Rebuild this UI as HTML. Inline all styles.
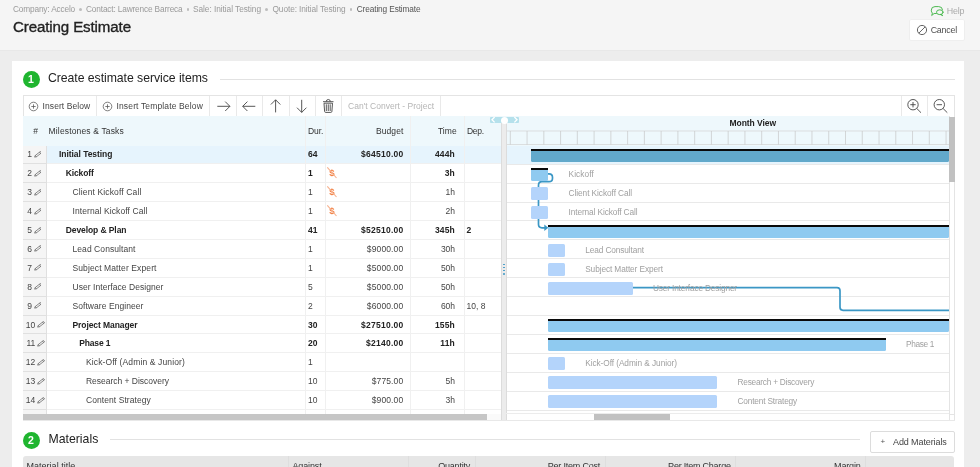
<!DOCTYPE html>
<html lang="en">
<head>
<meta charset="utf-8">
<title>Creating Estimate</title>
<style>
html,body{margin:0;padding:0;}
body{width:980px;height:467px;overflow:hidden;position:relative;background:#ededed;font-family:"Liberation Sans",sans-serif;color:#333;}
.abs{position:absolute;}
.t{position:absolute;white-space:nowrap;line-height:1;}
#hdr{left:0;top:0;width:980px;height:49.6px;background:#f5f5f5;border-bottom:0.8px solid #e8e8e8;}
.dot{position:absolute;width:2.6px;height:2.6px;border-radius:2px;background:#bdbdbd;top:8px;}
#title{-webkit-text-stroke:0.35px #222;}
#card{left:12px;top:60.5px;width:952px;height:420px;background:#fff;}
.circ{position:absolute;width:17px;height:17px;border-radius:50%;background:#1fb52f;color:#fff;font-size:10.5px;font-weight:bold;text-align:center;line-height:17px;}
.hr{position:absolute;height:1px;background:#e2e2e2;}
#tb{left:23px;top:95.3px;width:930px;height:20px;border:1px solid #e4e4e4;background:#fff;}
.vd{position:absolute;width:1px;background:#e9e9e9;top:96.3px;height:20px;}
#ghead{left:23px;top:116.3px;width:926px;height:30px;background:#eef8fc;}
.numc{position:absolute;left:23px;width:23px;background:#f5f5f5;}
.hl{position:absolute;height:1px;background:#ebebeb;}
.vl{position:absolute;width:1px;background:#f0f0f0;}
.task{position:absolute;background:#b4d4fb;border-radius:1.5px;}
.sum{position:absolute;background:#8fcaf0;border-top:2px solid #0a0a0a;border-radius:0 0 1.5px 1.5px;box-sizing:border-box;}
</style>
</head>
<body>
<div id="wrap" class="abs" style="left:0;top:0;width:980px;height:467px;will-change:transform">
<div id="hdr" class="abs"></div>

<span class="t" id="bc0" style="left:13px;top:4.97px;font-size:8.3px;color:#9a9a9a;letter-spacing:-0.17px">Company: Accelo</span>
<span class="t" id="bc1" style="left:86px;top:4.97px;font-size:8.3px;color:#9a9a9a;letter-spacing:-0.16px">Contact: Lawrence Barreca</span>
<span class="t" id="bc2" style="left:193px;top:4.97px;font-size:8.3px;color:#9a9a9a;letter-spacing:-0.05px">Sale: Initial Testing</span>
<span class="t" id="bc3" style="left:272.5px;top:4.97px;font-size:8.3px;color:#9a9a9a;letter-spacing:-0.09px">Quote: Initial Testing</span>
<span class="t" id="bc4" style="left:356.75px;top:4.97px;font-size:8.3px;color:#555;letter-spacing:-0.13px">Creating Estimate</span>
<i class="dot" style="left:79.0px"></i>
<i class="dot" style="left:186.5px"></i>
<i class="dot" style="left:265.25px"></i>
<i class="dot" style="left:349.5px"></i>
<span class="t" id="title" style="left:13px;top:19.12px;font-size:15.1px;color:#222;letter-spacing:-0.12px">Creating Estimate</span>
<svg class="abs" style="left:930px;top:5px" width="14" height="12" viewBox="0 0 14 12"><g fill="none" stroke="#43b649" stroke-width="0.95" stroke-linejoin="round" stroke-linecap="round"><path d="M6.3 8.5H4.100L1.700 10.500 2.400 8.100Q1.300 7.100 1.300 5.200 1.300 1.600 5 1.600H8.700Q12.300 1.600 12.500 4.700"/><ellipse cx="9.8" cy="7.2" rx="3.3" ry="2.4"/><path d="M11.500 9.300 12.700 10.700 10.500 9.600"/></g></svg>
<span class="t" id="help" style="left:946.8px;top:6.57px;font-size:8.9px;color:#aaa;letter-spacing:-0.17px">Help</span>
<div class="abs" id="cancel" style="left:909.8px;top:19.8px;width:54.2px;height:20.2px;background:#fff;box-shadow:0 0 0 0.6px #e9e9e9;border-radius:1px"></div>
<svg class="abs" style="left:916px;top:24px" width="12" height="12" viewBox="0 0 12 12"><circle cx="6" cy="6" r="4.6" fill="none" stroke="#555" stroke-width="0.9"/><path d="M2.8 9.2 9.2 2.8" stroke="#555" stroke-width="0.9"/></svg>
<span class="t" id="canceltxt" style="left:930.7px;top:25.77px;font-size:8.9px;color:#505050;letter-spacing:-0.24px">Cancel</span>
<div id="card" class="abs"></div>
<div class="circ" style="left:22.5px;top:70.5px">1</div>
<span class="t" id="sec1" style="left:48px;top:71.62px;font-size:12.26px;color:#222;letter-spacing:-0.05px">Create estimate service items</span>
<div class="hr" style="left:220px;top:79px;width:735px"></div>
<div id="tb" class="abs"></div>
<i class="vd" style="left:96px"></i>
<i class="vd" style="left:209px"></i>
<i class="vd" style="left:236px"></i>
<i class="vd" style="left:262px"></i>
<i class="vd" style="left:289px"></i>
<i class="vd" style="left:314.5px"></i>
<i class="vd" style="left:341px"></i>
<i class="vd" style="left:440px"></i>
<i class="vd" style="left:900.8px"></i>
<i class="vd" style="left:927px"></i>
<svg class="abs" style="left:27.9px;top:101px" width="11" height="11" viewBox="0 0 11 11"><circle cx="5.5" cy="5.5" r="4.3" fill="none" stroke="#555" stroke-width="0.75"/><path d="M5.5 3.3v4.400M3.3 5.5h4.400" stroke="#555" stroke-width="0.75"/></svg>
<span class="t" id="ib" style="left:42.6px;top:101.9px;font-size:8.5px;color:#444;letter-spacing:0.07px">Insert Below</span>
<svg class="abs" style="left:101.9px;top:101px" width="11" height="11" viewBox="0 0 11 11"><circle cx="5.5" cy="5.5" r="4.3" fill="none" stroke="#555" stroke-width="0.75"/><path d="M5.5 3.3v4.400M3.3 5.5h4.400" stroke="#555" stroke-width="0.75"/></svg>
<span class="t" id="itb" style="left:116.5px;top:101.9px;font-size:8.5px;color:#444;letter-spacing:0.14px">Insert Template Below</span>
<svg class="abs" style="left:0;top:0" width="980" height="467" viewBox="0 0 980 467">
<path d="M217.29999999999998 106.3H229.9M225.20000000000002 101.6L229.9 106.3L225.20000000000002 111.0" fill="none" stroke="#444" stroke-width="0.9"/>
<path d="M255.3 106.3H242.7M247.39999999999998 101.6L242.7 106.3L247.39999999999998 111.0" fill="none" stroke="#444" stroke-width="0.9"/>
<path d="M275.6 112.39999999999999V99.8M270.90000000000003 104.5L275.6 99.8L280.3 104.5" fill="none" stroke="#444" stroke-width="0.9"/>
<path d="M301.7 99.8V112.39999999999999M297.0 107.69999999999999L301.7 112.39999999999999L306.4 107.69999999999999" fill="none" stroke="#444" stroke-width="0.9"/>
<g fill="none" stroke="#444" stroke-width="0.9" stroke-linejoin="round"><path d="M323 101.7h10.500M326.3 101.5q0-2 2-2q2 0 2 2"/><path d="M324 103.2l.6 8.200q.1 1 1.100 1h5.100q1 0 1.100-1l.6-8.200z"/><path d="M326.3 104.3v6.700M328.250 104.3v6.700M330.2 104.3v6.700"/></g>
<g fill="none" stroke="#444" stroke-width="0.9"><circle cx="913" cy="104.7" r="5.2"/><path d="M916.8 108.5 921 112.7M913 102v5.400M910.3 104.7h5.400"/><circle cx="939.3" cy="104.7" r="5.2"/><path d="M943.1 108.5 947.3 112.7M936.600 104.7h5.400"/></g>
</svg>
<span class="t" id="cc" style="left:348.1px;top:101.9px;font-size:8.5px;color:#b5b5b5;letter-spacing:0.01px">Can't Convert - Project</span>
<div id="ghead" class="abs"></div>
<span class="t" id="gh0" style="left:33.2px;top:126.9px;font-size:8.5px;color:#333">#</span>
<span class="t" id="gh1" style="left:48.6px;top:126.9px;font-size:8.5px;color:#333;letter-spacing:0.15px">Milestones &amp; Tasks</span>
<span class="t" id="gh2" style="left:308px;top:126.9px;font-size:8.5px;color:#333;letter-spacing:-0.07px">Dur.</span>
<span class="t" id="gh3" style="right:576.7px;top:126.9px;font-size:8.5px;color:#333;letter-spacing:0.06px;margin-right:-0.06px">Budget</span>
<span class="t" id="gh4" style="right:523.3px;top:126.9px;font-size:8.5px;color:#333;letter-spacing:0.06px;margin-right:-0.06px">Time</span>
<span class="t" id="gh5" style="left:467px;top:126.9px;font-size:8.5px;color:#333;letter-spacing:-0.32px">Dep.</span>
<span class="t" id="mv" style="left:729.5px;top:119.3px;font-size:8.5px;color:#222;font-weight:bold;letter-spacing:-0.06px">Month View</span>
<div class="abs" style="left:23px;top:145.5px;width:478px;height:18.08px;background:#e6f4fd"></div>
<div class="abs" style="left:506.4px;top:145.5px;width:442.6px;height:18.68px;background:#e6f4fd"></div>
<div class="numc" style="top:145.5px;height:268.3px"></div>
<i class="hl" style="left:46px;top:163.08px;width:455px;background:#f0f0f0"></i>
<i class="hl" style="left:506.4px;top:163.68px;width:442.6px;background:#e9e9e9"></i>
<i class="hl" style="left:23px;top:163.08px;width:23px;background:#e0e0e0"></i>
<i class="hl" style="left:46px;top:182.01px;width:455px;background:#f0f0f0"></i>
<i class="hl" style="left:506.4px;top:182.6px;width:442.6px;background:#e9e9e9"></i>
<i class="hl" style="left:23px;top:182.01px;width:23px;background:#e0e0e0"></i>
<i class="hl" style="left:46px;top:200.94px;width:455px;background:#f0f0f0"></i>
<i class="hl" style="left:506.4px;top:201.53px;width:442.6px;background:#e9e9e9"></i>
<i class="hl" style="left:23px;top:200.94px;width:23px;background:#e0e0e0"></i>
<i class="hl" style="left:46px;top:219.87px;width:455px;background:#f0f0f0"></i>
<i class="hl" style="left:506.4px;top:220.45px;width:442.6px;background:#e9e9e9"></i>
<i class="hl" style="left:23px;top:219.87px;width:23px;background:#e0e0e0"></i>
<i class="hl" style="left:46px;top:238.8px;width:455px;background:#f0f0f0"></i>
<i class="hl" style="left:506.4px;top:239.38px;width:442.6px;background:#e9e9e9"></i>
<i class="hl" style="left:23px;top:238.8px;width:23px;background:#e0e0e0"></i>
<i class="hl" style="left:46px;top:257.73px;width:455px;background:#f0f0f0"></i>
<i class="hl" style="left:506.4px;top:258.3px;width:442.6px;background:#e9e9e9"></i>
<i class="hl" style="left:23px;top:257.73px;width:23px;background:#e0e0e0"></i>
<i class="hl" style="left:46px;top:276.66px;width:455px;background:#f0f0f0"></i>
<i class="hl" style="left:506.4px;top:277.23px;width:442.6px;background:#e9e9e9"></i>
<i class="hl" style="left:23px;top:276.66px;width:23px;background:#e0e0e0"></i>
<i class="hl" style="left:46px;top:295.59px;width:455px;background:#f0f0f0"></i>
<i class="hl" style="left:506.4px;top:296.15px;width:442.6px;background:#e9e9e9"></i>
<i class="hl" style="left:23px;top:295.59px;width:23px;background:#e0e0e0"></i>
<i class="hl" style="left:46px;top:314.52px;width:455px;background:#f0f0f0"></i>
<i class="hl" style="left:506.4px;top:315.08px;width:442.6px;background:#e9e9e9"></i>
<i class="hl" style="left:23px;top:314.52px;width:23px;background:#e0e0e0"></i>
<i class="hl" style="left:46px;top:333.45px;width:455px;background:#f0f0f0"></i>
<i class="hl" style="left:506.4px;top:334px;width:442.6px;background:#e9e9e9"></i>
<i class="hl" style="left:23px;top:333.45px;width:23px;background:#e0e0e0"></i>
<i class="hl" style="left:46px;top:352.38px;width:455px;background:#f0f0f0"></i>
<i class="hl" style="left:506.4px;top:352.93px;width:442.6px;background:#e9e9e9"></i>
<i class="hl" style="left:23px;top:352.38px;width:23px;background:#e0e0e0"></i>
<i class="hl" style="left:46px;top:371.31px;width:455px;background:#f0f0f0"></i>
<i class="hl" style="left:506.4px;top:371.85px;width:442.6px;background:#e9e9e9"></i>
<i class="hl" style="left:23px;top:371.31px;width:23px;background:#e0e0e0"></i>
<i class="hl" style="left:46px;top:390.24px;width:455px;background:#f0f0f0"></i>
<i class="hl" style="left:506.4px;top:390.77px;width:442.6px;background:#e9e9e9"></i>
<i class="hl" style="left:23px;top:390.24px;width:23px;background:#e0e0e0"></i>
<i class="hl" style="left:46px;top:409.17px;width:455px;background:#f0f0f0"></i>
<i class="hl" style="left:506.4px;top:409.7px;width:442.6px;background:#e9e9e9"></i>
<i class="hl" style="left:23px;top:409.17px;width:23px;background:#e0e0e0"></i>
<i class="vl" style="left:45.6px;top:145.5px;height:269.3px;background:#e0e0e0"></i>
<i class="vl" style="left:304.8px;top:116px;height:298.5px"></i>
<i class="vl" style="left:324.7px;top:116px;height:298.5px"></i>
<i class="vl" style="left:409.5px;top:116px;height:298.5px"></i>
<i class="vl" style="left:463.5px;top:116px;height:298.5px"></i>
<span class="t" id="r1" style="right:948.1px;top:150.36px;font-size:8.5px;color:#444">1</span>
<svg class="abs" style="left:33.5px;top:150.86px" width="7.9" height="7" viewBox="0 0 9 8"><g transform="rotate(-38 4.5 4)" fill="none" stroke="#555" stroke-width="0.7" stroke-linejoin="round"><path d="M-.4 4 1.500 3v2zM1.5 3h7.400v2h-7.400M7.600 3v2"/></g></svg>
<span class="t" id="n1" style="left:59px;top:150.36px;font-size:8.5px;color:#222;font-weight:bold;letter-spacing:-0.05px">Initial Testing</span>
<span class="t" id="d1" style="left:308px;top:150.36px;font-size:8.5px;color:#222;font-weight:bold;letter-spacing:0.1px">64</span>
<span class="t" id="b1" style="right:576.8px;top:150.36px;font-size:8.5px;color:#222;font-weight:bold;letter-spacing:0.25px;margin-right:-0.25px">$64510.00</span>
<span class="t" id="t1" style="right:525.2px;top:150.36px;font-size:8.5px;color:#222;font-weight:bold;letter-spacing:0.16px;margin-right:-0.16px">444h</span>
<span class="t" id="r2" style="right:948.1px;top:169.27px;font-size:8.5px;color:#444">2</span>
<svg class="abs" style="left:33.5px;top:169.77px" width="7.9" height="7" viewBox="0 0 9 8"><g transform="rotate(-38 4.5 4)" fill="none" stroke="#555" stroke-width="0.7" stroke-linejoin="round"><path d="M-.4 4 1.500 3v2zM1.5 3h7.400v2h-7.400M7.600 3v2"/></g></svg>
<span class="t" id="n2" style="left:65.75px;top:169.27px;font-size:8.5px;color:#222;font-weight:bold;letter-spacing:-0.12px">Kickoff</span>
<span class="t" id="d2" style="left:308px;top:169.27px;font-size:8.5px;color:#222;font-weight:bold;letter-spacing:0.1px">1</span>
<span class="t" id="t2" style="right:525.2px;top:169.27px;font-size:8.5px;color:#222;font-weight:bold;letter-spacing:0.15px;margin-right:-0.15px">3h</span>
<svg class="abs" style="left:326.1px;top:166.27px" width="12" height="13" viewBox="0 0 12 13"><text x="6" y="9.8" text-anchor="middle" font-family="Liberation Sans, sans-serif" font-weight="bold" font-size="9.6" fill="#f27d3f">$</text><path d="M1.3 1.3 10.5 12" stroke="#f6b08c" stroke-width="1.1" fill="none"/></svg>
<span class="t" id="r3" style="right:948.1px;top:188.18px;font-size:8.5px;color:#444">3</span>
<svg class="abs" style="left:33.5px;top:188.68px" width="7.9" height="7" viewBox="0 0 9 8"><g transform="rotate(-38 4.5 4)" fill="none" stroke="#555" stroke-width="0.7" stroke-linejoin="round"><path d="M-.4 4 1.500 3v2zM1.5 3h7.400v2h-7.400M7.600 3v2"/></g></svg>
<span class="t" id="n3" style="left:72.5px;top:188.18px;font-size:8.5px;color:#444;letter-spacing:0.13px">Client Kickoff Call</span>
<span class="t" id="d3" style="left:308px;top:188.18px;font-size:8.5px;color:#444">1</span>
<span class="t" id="t3" style="right:525px;top:188.18px;font-size:8.5px;color:#444;letter-spacing:-0.03px;margin-right:0.03px">1h</span>
<svg class="abs" style="left:326.1px;top:185.18px" width="12" height="13" viewBox="0 0 12 13"><text x="6" y="9.8" text-anchor="middle" font-family="Liberation Sans, sans-serif" font-weight="bold" font-size="9.6" fill="#f27d3f">$</text><path d="M1.3 1.3 10.5 12" stroke="#f6b08c" stroke-width="1.1" fill="none"/></svg>
<span class="t" id="r4" style="right:948.1px;top:207.09px;font-size:8.5px;color:#444">4</span>
<svg class="abs" style="left:33.5px;top:207.59px" width="7.9" height="7" viewBox="0 0 9 8"><g transform="rotate(-38 4.5 4)" fill="none" stroke="#555" stroke-width="0.7" stroke-linejoin="round"><path d="M-.4 4 1.500 3v2zM1.5 3h7.400v2h-7.400M7.600 3v2"/></g></svg>
<span class="t" id="n4" style="left:72.5px;top:207.09px;font-size:8.5px;color:#444;letter-spacing:0.09px">Internal Kickoff Call</span>
<span class="t" id="d4" style="left:308px;top:207.09px;font-size:8.5px;color:#444">1</span>
<span class="t" id="t4" style="right:525px;top:207.09px;font-size:8.5px;color:#444;letter-spacing:-0.03px;margin-right:0.03px">2h</span>
<svg class="abs" style="left:326.1px;top:204.09px" width="12" height="13" viewBox="0 0 12 13"><text x="6" y="9.8" text-anchor="middle" font-family="Liberation Sans, sans-serif" font-weight="bold" font-size="9.6" fill="#f27d3f">$</text><path d="M1.3 1.3 10.5 12" stroke="#f6b08c" stroke-width="1.1" fill="none"/></svg>
<span class="t" id="r5" style="right:948.1px;top:226px;font-size:8.5px;color:#444">5</span>
<svg class="abs" style="left:33.5px;top:226.5px" width="7.9" height="7" viewBox="0 0 9 8"><g transform="rotate(-38 4.5 4)" fill="none" stroke="#555" stroke-width="0.7" stroke-linejoin="round"><path d="M-.4 4 1.500 3v2zM1.5 3h7.400v2h-7.400M7.600 3v2"/></g></svg>
<span class="t" id="n5" style="left:65.75px;top:226px;font-size:8.5px;color:#222;font-weight:bold;letter-spacing:-0.09px">Develop &amp; Plan</span>
<span class="t" id="d5" style="left:308px;top:226px;font-size:8.5px;color:#222;font-weight:bold;letter-spacing:0.1px">41</span>
<span class="t" id="b5" style="right:576.8px;top:226px;font-size:8.5px;color:#222;font-weight:bold;letter-spacing:0.24px;margin-right:-0.24px">$52510.00</span>
<span class="t" id="t5" style="right:525.2px;top:226px;font-size:8.5px;color:#222;font-weight:bold;letter-spacing:0.15px;margin-right:-0.15px">345h</span>
<span class="t" id="p5" style="left:466.5px;top:226px;font-size:8.5px;color:#222;font-weight:bold">2</span>
<span class="t" id="r6" style="right:948.1px;top:244.91px;font-size:8.5px;color:#444">6</span>
<svg class="abs" style="left:33.5px;top:245.4px" width="7.9" height="7" viewBox="0 0 9 8"><g transform="rotate(-38 4.5 4)" fill="none" stroke="#555" stroke-width="0.7" stroke-linejoin="round"><path d="M-.4 4 1.500 3v2zM1.5 3h7.400v2h-7.400M7.600 3v2"/></g></svg>
<span class="t" id="n6" style="left:72.5px;top:244.91px;font-size:8.5px;color:#444;letter-spacing:0.07px">Lead Consultant</span>
<span class="t" id="d6" style="left:308px;top:244.91px;font-size:8.5px;color:#444">1</span>
<span class="t" id="b6" style="right:576.8px;top:244.91px;font-size:8.5px;color:#444;letter-spacing:0.13px;margin-right:-0.13px">$9000.00</span>
<span class="t" id="t6" style="right:525px;top:244.91px;font-size:8.5px;color:#444;letter-spacing:-0.06px;margin-right:0.06px">30h</span>
<span class="t" id="r7" style="right:948.1px;top:263.82px;font-size:8.5px;color:#444">7</span>
<svg class="abs" style="left:33.5px;top:264.31px" width="7.9" height="7" viewBox="0 0 9 8"><g transform="rotate(-38 4.5 4)" fill="none" stroke="#555" stroke-width="0.7" stroke-linejoin="round"><path d="M-.4 4 1.500 3v2zM1.5 3h7.400v2h-7.400M7.600 3v2"/></g></svg>
<span class="t" id="n7" style="left:72.5px;top:263.82px;font-size:8.5px;color:#444;letter-spacing:0.11px">Subject Matter Expert</span>
<span class="t" id="d7" style="left:308px;top:263.82px;font-size:8.5px;color:#444">1</span>
<span class="t" id="b7" style="right:576.8px;top:263.82px;font-size:8.5px;color:#444;letter-spacing:0.13px;margin-right:-0.13px">$5000.00</span>
<span class="t" id="t7" style="right:525px;top:263.82px;font-size:8.5px;color:#444;letter-spacing:-0.03px;margin-right:0.03px">50h</span>
<span class="t" id="r8" style="right:948.1px;top:282.73px;font-size:8.5px;color:#444">8</span>
<svg class="abs" style="left:33.5px;top:283.22px" width="7.9" height="7" viewBox="0 0 9 8"><g transform="rotate(-38 4.5 4)" fill="none" stroke="#555" stroke-width="0.7" stroke-linejoin="round"><path d="M-.4 4 1.500 3v2zM1.5 3h7.400v2h-7.400M7.600 3v2"/></g></svg>
<span class="t" id="n8" style="left:72.5px;top:282.73px;font-size:8.5px;color:#444;letter-spacing:0.05px">User Interface Designer</span>
<span class="t" id="d8" style="left:308px;top:282.73px;font-size:8.5px;color:#444">5</span>
<span class="t" id="b8" style="right:576.8px;top:282.73px;font-size:8.5px;color:#444;letter-spacing:0.13px;margin-right:-0.13px">$5000.00</span>
<span class="t" id="t8" style="right:525px;top:282.73px;font-size:8.5px;color:#444;letter-spacing:-0.03px;margin-right:0.03px">50h</span>
<span class="t" id="r9" style="right:948.1px;top:301.64px;font-size:8.5px;color:#444">9</span>
<svg class="abs" style="left:33.5px;top:302.13px" width="7.9" height="7" viewBox="0 0 9 8"><g transform="rotate(-38 4.5 4)" fill="none" stroke="#555" stroke-width="0.7" stroke-linejoin="round"><path d="M-.4 4 1.500 3v2zM1.5 3h7.400v2h-7.400M7.600 3v2"/></g></svg>
<span class="t" id="n9" style="left:72.5px;top:301.64px;font-size:8.5px;color:#444;letter-spacing:0.06px">Software Engineer</span>
<span class="t" id="d9" style="left:308px;top:301.64px;font-size:8.5px;color:#444">2</span>
<span class="t" id="b9" style="right:576.8px;top:301.64px;font-size:8.5px;color:#444;letter-spacing:0.13px;margin-right:-0.13px">$6000.00</span>
<span class="t" id="t9" style="right:525px;top:301.64px;font-size:8.5px;color:#444;letter-spacing:-0.03px;margin-right:0.03px">60h</span>
<span class="t" id="p9" style="left:466.5px;top:301.64px;font-size:8.5px;color:#444">10, 8</span>
<span class="t" id="r10" style="right:944.8px;top:320.54px;font-size:8.5px;color:#444">10</span>
<svg class="abs" style="left:36.8px;top:321.04px" width="7.9" height="7" viewBox="0 0 9 8"><g transform="rotate(-38 4.5 4)" fill="none" stroke="#555" stroke-width="0.7" stroke-linejoin="round"><path d="M-.4 4 1.500 3v2zM1.5 3h7.400v2h-7.400M7.600 3v2"/></g></svg>
<span class="t" id="n10" style="left:72.5px;top:320.54px;font-size:8.5px;color:#222;font-weight:bold;letter-spacing:-0.08px">Project Manager</span>
<span class="t" id="d10" style="left:308px;top:320.54px;font-size:8.5px;color:#222;font-weight:bold;letter-spacing:0.1px">30</span>
<span class="t" id="b10" style="right:576.8px;top:320.54px;font-size:8.5px;color:#222;font-weight:bold;letter-spacing:0.24px;margin-right:-0.24px">$27510.00</span>
<span class="t" id="t10" style="right:525.2px;top:320.54px;font-size:8.5px;color:#222;font-weight:bold;letter-spacing:0.15px;margin-right:-0.15px">155h</span>
<span class="t" id="r11" style="right:944.8px;top:339.45px;font-size:8.5px;color:#444">11</span>
<svg class="abs" style="left:36.8px;top:339.95px" width="7.9" height="7" viewBox="0 0 9 8"><g transform="rotate(-38 4.5 4)" fill="none" stroke="#555" stroke-width="0.7" stroke-linejoin="round"><path d="M-.4 4 1.500 3v2zM1.5 3h7.400v2h-7.400M7.600 3v2"/></g></svg>
<span class="t" id="n11" style="left:79.25px;top:339.45px;font-size:8.5px;color:#222;font-weight:bold;letter-spacing:-0.16px">Phase 1</span>
<span class="t" id="d11" style="left:308px;top:339.45px;font-size:8.5px;color:#222;font-weight:bold;letter-spacing:0.1px">20</span>
<span class="t" id="b11" style="right:576.8px;top:339.45px;font-size:8.5px;color:#222;font-weight:bold;letter-spacing:0.24px;margin-right:-0.24px">$2140.00</span>
<span class="t" id="t11" style="right:525.2px;top:339.45px;font-size:8.5px;color:#222;font-weight:bold;letter-spacing:0.15px;margin-right:-0.15px">11h</span>
<span class="t" id="r12" style="right:944.8px;top:358.36px;font-size:8.5px;color:#444">12</span>
<svg class="abs" style="left:36.8px;top:358.86px" width="7.9" height="7" viewBox="0 0 9 8"><g transform="rotate(-38 4.5 4)" fill="none" stroke="#555" stroke-width="0.7" stroke-linejoin="round"><path d="M-.4 4 1.500 3v2zM1.5 3h7.400v2h-7.400M7.600 3v2"/></g></svg>
<span class="t" id="n12" style="left:86px;top:358.36px;font-size:8.5px;color:#444;letter-spacing:0.13px">Kick-Off (Admin &amp; Junior)</span>
<span class="t" id="d12" style="left:308px;top:358.36px;font-size:8.5px;color:#444">1</span>
<span class="t" id="r13" style="right:944.8px;top:377.27px;font-size:8.5px;color:#444">13</span>
<svg class="abs" style="left:36.8px;top:377.77px" width="7.9" height="7" viewBox="0 0 9 8"><g transform="rotate(-38 4.5 4)" fill="none" stroke="#555" stroke-width="0.7" stroke-linejoin="round"><path d="M-.4 4 1.500 3v2zM1.5 3h7.400v2h-7.400M7.600 3v2"/></g></svg>
<span class="t" id="n13" style="left:86px;top:377.27px;font-size:8.5px;color:#444;letter-spacing:-0.02px">Research + Discovery</span>
<span class="t" id="d13" style="left:308px;top:377.27px;font-size:8.5px;color:#444">10</span>
<span class="t" id="b13" style="right:576.8px;top:377.27px;font-size:8.5px;color:#444;letter-spacing:0.13px;margin-right:-0.13px">$775.00</span>
<span class="t" id="t13" style="right:525px;top:377.27px;font-size:8.5px;color:#444;letter-spacing:-0.03px;margin-right:0.03px">5h</span>
<span class="t" id="r14" style="right:944.8px;top:396.18px;font-size:8.5px;color:#444">14</span>
<svg class="abs" style="left:36.8px;top:396.68px" width="7.9" height="7" viewBox="0 0 9 8"><g transform="rotate(-38 4.5 4)" fill="none" stroke="#555" stroke-width="0.7" stroke-linejoin="round"><path d="M-.4 4 1.500 3v2zM1.5 3h7.400v2h-7.400M7.600 3v2"/></g></svg>
<span class="t" id="n14" style="left:86px;top:396.18px;font-size:8.5px;color:#444;letter-spacing:0.07px">Content Strategy</span>
<span class="t" id="d14" style="left:308px;top:396.18px;font-size:8.5px;color:#444">10</span>
<span class="t" id="b14" style="right:576.8px;top:396.18px;font-size:8.5px;color:#444;letter-spacing:0.13px;margin-right:-0.13px">$900.00</span>
<span class="t" id="t14" style="right:525px;top:396.18px;font-size:8.5px;color:#444;letter-spacing:-0.03px;margin-right:0.03px">3h</span>
<div class="abs" style="left:23px;top:413.8px;width:478px;height:6.2px;background:#fafafa"></div>
<div class="abs" style="left:23px;top:413.8px;width:463.5px;height:6px;background:#c6c6c6"></div>
<div class="abs" style="left:501.2px;top:120px;width:3.9px;height:300px;background:#ececec;border-left:.6px solid #dcdcdc;border-right:.6px solid #dcdcdc"></div>
<div class="abs" style="left:489.8px;top:116.5px;width:29.4px;height:6.3px;background:#b5e1ec;border-radius:1px"></div>
<div class="abs" style="left:500.5px;top:116.5px;width:7.2px;height:7.2px;border-radius:50%;background:#fff"></div>
<svg class="abs" style="left:489px;top:116px" width="31" height="8" viewBox="0 0 31 8"><path d="M5.6 1 3 3.700 5.600 6.400M25.4 1 28 3.700 25.400 6.400" fill="none" stroke="#fff" stroke-width="1.3"/></svg>
<i class="abs" style="left:503px;top:263.5px;width:1.5px;height:1.5px;background:#3b97c5;border-radius:1px"></i>
<i class="abs" style="left:503px;top:266.7px;width:1.5px;height:1.5px;background:#3b97c5;border-radius:1px"></i>
<i class="abs" style="left:503px;top:269.9px;width:1.5px;height:1.5px;background:#3b97c5;border-radius:1px"></i>
<i class="abs" style="left:503px;top:273.1px;width:1.5px;height:1.5px;background:#3b97c5;border-radius:1px"></i>
<svg class="abs" style="left:0;top:0" width="980" height="467" viewBox="0 0 980 467">
<path d="M507 131H949M507 144.500H949" stroke="#d2d2d2" stroke-width="0.7"/>
<path d="M510.3 131V144.5M527.06 131V144.5M543.82 131V144.5M560.58 131V144.5M577.34 131V144.5M594.1 131V144.5M610.86 131V144.5M627.62 131V144.5M644.38 131V144.5M661.14 131V144.5M677.9 131V144.5M694.66 131V144.5M711.42 131V144.5M728.18 131V144.5M744.94 131V144.5M761.7 131V144.5M778.46 131V144.5M795.22 131V144.5M811.98 131V144.5M828.74 131V144.5M845.5 131V144.5M862.26 131V144.5M879.02 131V144.5M895.78 131V144.5M912.54 131V144.5M929.3 131V144.5M946.06 131V144.5" stroke="#c2c2c2" stroke-width="0.65"/>
<g fill="none" stroke="#3b97c5" stroke-width="1.7">
<path d="M548 173.8H549Q552.5 173.8 552.5 177.300V178.200Q552.5 181.7 549 181.700H542Q538.5 181.7 538.5 185.200V224.300Q538.5 227.8 542 227.800H546"/>
<path d="M632.5 287.7H837Q840 287.7 840 290.700V307.300Q840 310.3 843 310.300H949"/>
</g>
<path d="M544.3 224.6 548.3 227.8 544.3 231z" fill="#3b97c5"/>
</svg>
<div class="sum" style="left:531px;top:148.93px;width:418px;height:13.2px;background:#62a9cb"></div>
<div class="sum" style="left:531px;top:167.86px;width:17px;height:13.2px"></div>
<div class="task" style="left:531px;top:187.04px;width:17px;height:12.9px"></div>
<div class="task" style="left:531px;top:205.97px;width:17px;height:12.9px"></div>
<div class="sum" style="left:548px;top:224.65px;width:401px;height:13.2px"></div>
<div class="task" style="left:548px;top:243.83px;width:17px;height:12.9px"></div>
<div class="task" style="left:548px;top:262.76px;width:17px;height:12.9px"></div>
<div class="task" style="left:548px;top:281.69px;width:84.5px;height:12.9px"></div>
<div class="sum" style="left:548px;top:319.3px;width:401px;height:13.2px"></div>
<div class="sum" style="left:548px;top:338.23px;width:337.7px;height:13.2px"></div>
<div class="task" style="left:548px;top:357.41px;width:17px;height:12.9px"></div>
<div class="task" style="left:548px;top:376.34px;width:169px;height:12.9px"></div>
<div class="task" style="left:548px;top:395.27px;width:169px;height:12.9px"></div>
<span class="t" id="g2" style="left:568.6px;top:169.93px;font-size:8.3px;color:#a0a0a0;letter-spacing:0.06px">Kickoff</span>
<span class="t" id="g3" style="left:568.6px;top:188.86px;font-size:8.3px;color:#a0a0a0;letter-spacing:-0.07px">Client Kickoff Call</span>
<span class="t" id="g4" style="left:568.6px;top:207.79px;font-size:8.3px;color:#a0a0a0;letter-spacing:-0.12px">Internal Kickoff Call</span>
<span class="t" id="g6" style="left:585.2px;top:245.65px;font-size:8.3px;color:#a0a0a0;letter-spacing:-0.11px">Lead Consultant</span>
<span class="t" id="g7" style="left:585.2px;top:264.58px;font-size:8.3px;color:#a0a0a0;letter-spacing:-0.1px">Subject Matter Expert</span>
<span class="t" id="g8" style="left:653px;top:283.51px;font-size:8.3px;color:#a0a0a0;letter-spacing:-0.16px">User Interface Designer</span>
<span class="t" id="g11" style="left:906px;top:340.3px;font-size:8.3px;color:#a0a0a0;letter-spacing:-0.35px">Phase 1</span>
<span class="t" id="g12" style="left:585.2px;top:359.23px;font-size:8.3px;color:#a0a0a0;letter-spacing:-0.07px">Kick-Off (Admin &amp; Junior)</span>
<span class="t" id="g13" style="left:737.5px;top:378.16px;font-size:8.3px;color:#a0a0a0;letter-spacing:-0.24px">Research + Discovery</span>
<span class="t" id="g14" style="left:737.5px;top:397.09px;font-size:8.3px;color:#a0a0a0;letter-spacing:-0.17px">Content Strategy</span>
<div class="abs" style="left:507px;top:414px;width:442px;height:6px;background:#fff"></div>
<div class="abs" style="left:594px;top:414px;width:76px;height:6px;background:#c1c1c1"></div>
<div class="abs" style="left:949px;top:116px;width:6px;height:304px;background:#fff;border-left:1px solid #e4e4e4;border-right:1px solid #e4e4e4;box-sizing:border-box"></div>
<div class="abs" style="left:949px;top:117px;width:5.5px;height:64.5px;background:#c1c1c1"></div>
<div class="hl" style="left:23px;top:420px;width:932px;background:#e8e8e8"></div>
<div class="hl" style="left:506.4px;top:412.9px;width:442.6px;background:#ececec"></div>
<div class="hl" style="left:949px;top:413.5px;width:6px;background:#e4e4e4"></div>
<div class="circ" style="left:22.5px;top:432px">2</div>
<span class="t" id="sec2" style="left:48.5px;top:432.62px;font-size:12.26px;color:#222;letter-spacing:0.01px">Materials</span>
<div class="hr" style="left:110px;top:439px;width:750px"></div>
<div class="abs" style="left:870px;top:431px;width:83px;height:20px;border:1px solid #dcdcdc;border-radius:2px;background:#fff"></div>
<span class="t" id="amp" style="left:880.5px;top:438.23px;font-size:8px;color:#555">+</span>
<span class="t" id="am" style="left:893px;top:437.98px;font-size:9px;color:#444;letter-spacing:-0.1px">Add Materials</span>
<div class="abs" style="left:22.5px;top:456px;width:931.5px;height:20px;background:#e6e6e6;border-radius:3px 3px 0 0"></div>
<i class="vl" style="left:287.8px;top:456px;height:12px;background:#dedede"></i>
<i class="vl" style="left:407.8px;top:456px;height:12px;background:#dedede"></i>
<i class="vl" style="left:474.5px;top:456px;height:12px;background:#dedede"></i>
<i class="vl" style="left:604.5px;top:456px;height:12px;background:#dedede"></i>
<i class="vl" style="left:735px;top:456px;height:12px;background:#dedede"></i>
<i class="vl" style="left:864.8px;top:456px;height:12px;background:#dedede"></i>
<span class="t" id="m0" style="left:26.5px;top:462.18px;font-size:9px;color:#333;letter-spacing:0.02px">Material title</span>
<span class="t" id="m1" style="left:292.5px;top:462.18px;font-size:9px;color:#333;letter-spacing:-0.13px">Against</span>
<span class="t" id="m2" style="right:509.7px;top:462.18px;font-size:9px;color:#333;letter-spacing:-0.19px;margin-right:0.19px">Quantity</span>
<span class="t" id="m3" style="right:379.7px;top:462.18px;font-size:9px;color:#333;letter-spacing:-0.2px;margin-right:0.2px">Per Item Cost</span>
<span class="t" id="m4" style="right:249.1px;top:462.18px;font-size:9px;color:#333;letter-spacing:-0.23px;margin-right:0.23px">Per Item Charge</span>
<span class="t" id="m5" style="right:119.25px;top:462.18px;font-size:9px;color:#333;letter-spacing:-0.17px;margin-right:0.17px">Margin</span>
</div>
</body></html>
